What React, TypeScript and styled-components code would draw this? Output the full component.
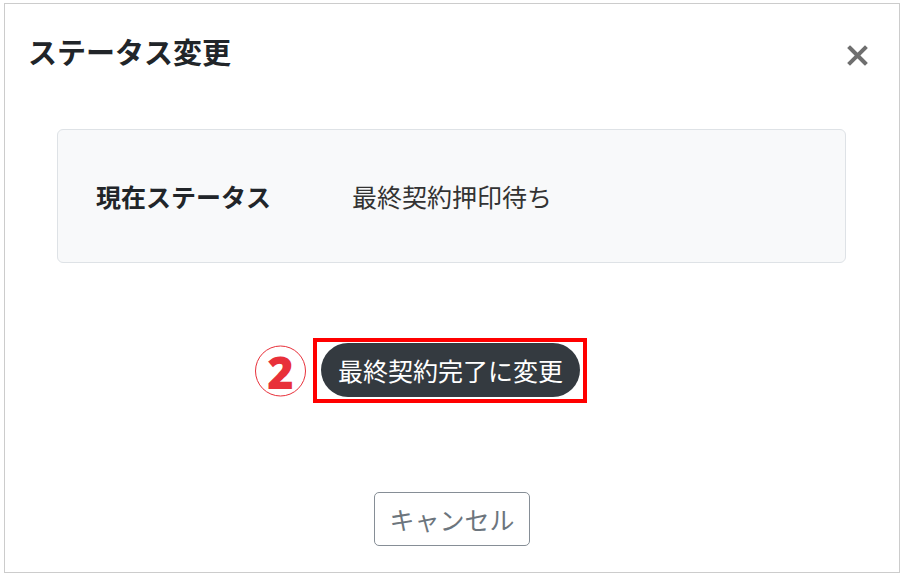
import React from 'react'
import styled, { createGlobalStyle } from 'styled-components'

const GlobalStyle = createGlobalStyle`
  body {
    margin: 0;
    background: #ffffff;
    font-family: "Noto Sans CJK JP", "Noto Sans", sans-serif;
    color: #212529;
  }
`

const Frame = styled.div`
  box-sizing: border-box;
  width: 896px;
  height: 570px;
  margin: 3px 0 0 4px;
  border: 1px solid #cccccc;
  background: #ffffff;
  display: flex;
  flex-direction: column;
`

const Header = styled.div`
  display: flex;
  align-items: center;
  justify-content: space-between;
  padding: 30px 31px 0 23px;
`

const Title = styled.h2`
  margin: 0;
  font-size: 29px;
  line-height: 34px;
  font-weight: 700;
  color: #212529;
`

const CloseButton = styled.button`
  border: none;
  background: transparent;
  padding: 0;
  margin-top: 8px;
  width: 22px;
  height: 22px;
  display: flex;
  align-items: center;
  justify-content: center;
  cursor: pointer;
`

const InfoBox = styled.div`
  box-sizing: border-box;
  margin: 61px 53px 0 52px;
  height: 134px;
  border: 1px solid #dee2e6;
  border-radius: 6px;
  background: #f8f9fa;
  display: flex;
  align-items: center;
  padding: 0 38px;
`

const Label = styled.div`
  width: 256px;
  font-size: 25px;
  font-weight: 700;
  color: #212529;
`

const Value = styled.div`
  font-size: 25px;
  font-weight: 400;
  color: #333333;
`

const ActionRow = styled.div`
  margin-top: 75px;
  display: flex;
  justify-content: center;
`

const Highlight = styled.div`
  position: relative;
  margin-left: -4px;
  border: 4px solid #ff0000;
  padding: 1px 3px 2px 4px;
  display: flex;
`

const StepMark = styled.span`
  position: absolute;
  right: calc(100% + 11px);
  top: 50%;
  transform: translateY(-50%);
  box-sizing: border-box;
  width: 51px;
  height: 51px;
  border: 1.5px solid #e8303a;
  border-radius: 50%;
  color: #e8303a;
  font-family: "Open Sans", "Noto Sans", sans-serif;
  font-size: 45px;
  font-weight: 800;
  line-height: 1;
  display: flex;
  align-items: center;
  justify-content: center;
`

const PrimaryButton = styled.button`
  box-sizing: border-box;
  height: 54px;
  width: 259px;
  padding: 0;
  border: none;
  border-radius: 27px;
  background: #343a40;
  color: #ffffff;
  font-family: inherit;
  font-size: 25px;
  display: inline-flex;
  align-items: center;
  justify-content: center;
  cursor: pointer;
`

const FooterRow = styled.div`
  margin-top: 89px;
  display: flex;
  justify-content: center;
`

const OutlineButton = styled.button`
  box-sizing: border-box;
  width: 156px;
  height: 54px;
  padding: 0;
  border: 1px solid #868e96;
  border-radius: 5px;
  background: #ffffff;
  color: #6c757d;
  font-family: inherit;
  font-size: 25px;
  display: inline-flex;
  align-items: center;
  justify-content: center;
  cursor: pointer;
`

const CloseIcon = () => (
  <svg width="21" height="21" viewBox="0 0 21 21">
    <path d="M3 3 L18 18 M18 3 L3 18" stroke="#6f6f6f" strokeWidth="4" strokeLinecap="square" />
  </svg>
)

export default function App() {
  return (
    <>
      <GlobalStyle />
      <Frame>
        <Header>
          <Title>ステータス変更</Title>
          <CloseButton aria-label="閉じる">
            <CloseIcon />
          </CloseButton>
        </Header>
        <InfoBox>
          <Label>現在ステータス</Label>
          <Value>最終契約押印待ち</Value>
        </InfoBox>
        <ActionRow>
          <Highlight>
            <StepMark>2</StepMark>
            <PrimaryButton>最終契約完了に変更</PrimaryButton>
          </Highlight>
        </ActionRow>
        <FooterRow>
          <OutlineButton>キャンセル</OutlineButton>
        </FooterRow>
      </Frame>
    </>
  )
}
